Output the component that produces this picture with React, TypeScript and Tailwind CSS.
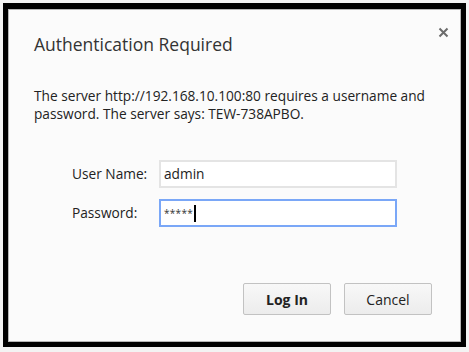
import React from "react";

export default function App() {
  const font = { fontFamily: '"Open Sans", "Noto Sans", sans-serif' };
  return (
    <div className="w-[469px] h-[352px] bg-[#f3f3f3] pt-[3px] pl-[3px]" style={font}>
      <div className="w-[463px] h-[344px] border-[5px] border-t-[6px] border-black bg-black">
        <div className="relative w-full h-full border border-[#b5b5b5] bg-[#fbfbfb] text-[#222]">
          <div className="absolute right-[11px] top-[17px]">
            <svg width="11" height="11" viewBox="0 0 11 11">
              <path d="M1.5 1.5 L9.5 9.5 M9.5 1.5 L1.5 9.5" stroke="#6b6b6b" strokeWidth="2" />
            </svg>
          </div>
          <div className="pl-[25px] pt-[21px]">
            <div className="text-[17.5px] leading-[26px] text-[#333]">Authentication Required</div>
            <div className="mt-[30px] text-[13.7px] leading-[18px] text-[#222]">
              <div>The server http://192.168.10.100:80 requires a username and</div>
              <div>password. The server says: TEW-738APBO.</div>
            </div>
            <div className="mt-[37px] pl-[38px] flex flex-col gap-[11px]">
              <div className="flex items-center">
                <div className="w-[87px] text-[13.7px]">User Name:</div>
                <div className="w-[238px] h-[28px] border-2 border-[#e4e4e4] bg-white flex items-center pl-[3px] text-[13.7px]">
                  admin
                </div>
              </div>
              <div className="flex items-center">
                <div className="w-[87px] text-[13.7px]">Password:</div>
                <div className="w-[238px] h-[28px] border-2 border-[#7aa7f7] bg-white flex items-center pl-[3px] text-[10px]">
                  <span className="tracking-[0.3px] text-[#333]">*****</span>
                  <span className="ml-[1px] w-[1.5px] h-[17px] bg-black" />
                </div>
              </div>
            </div>
          </div>
          <div className="absolute left-[234px] top-[273px] flex gap-[13px]">
            <button className="w-[88px] h-[32px] rounded-[2px] border border-[#c2c2c2] bg-gradient-to-b from-[#f8f8f8] to-[#ececec] text-[14px] font-bold text-[#222]">
              Log In
            </button>
            <button className="w-[88px] h-[32px] rounded-[2px] border border-[#c2c2c2] bg-gradient-to-b from-[#f8f8f8] to-[#ececec] text-[14px] text-[#222]">
              Cancel
            </button>
          </div>
        </div>
      </div>
    </div>
  );
}
